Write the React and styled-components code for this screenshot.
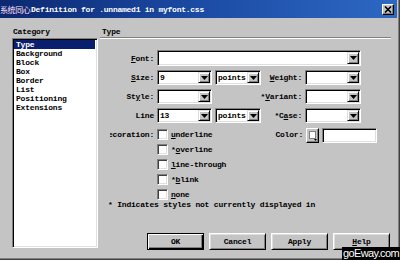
import React from 'react';
import styled, { createGlobalStyle } from 'styled-components';

const MONO = `"Liberation Mono", "DejaVu Sans Mono", "Noto Sans CJK SC", monospace`;
const FACE = '#c4c4c4';

const Global = createGlobalStyle`
  html, body { margin: 0; padding: 0; background: ${FACE}; }
  body { font-family: ${MONO}; }
  * { box-sizing: border-box; }
`;

const Window = styled.div`
  position: relative;
  width: 400px;
  height: 260px;
  background: ${FACE};
  display: flex;
  flex-direction: column;
  padding: 0 3px 2px 0;
  box-shadow: inset -1px -1px 0 #404040, inset -2px -2px 0 #808080;
  font-family: ${MONO};
  font-size: 8px;
  font-weight: bold;
  letter-spacing: -0.2px;
  color: #000;
  overflow: hidden;
`;

const TitleBar = styled.div`
  height: 18px;
  flex: 0 0 18px;
  display: flex;
  align-items: center;
  padding: 0 3px 0 0;
  background: linear-gradient(to right, #0b2870 0%, #1a48a0 45%, #2d68c4 100%);
  color: #fff;
`;

const Stamp = styled.span`
  flex: 0 0 auto;
  width: 31px;
  height: 15px;
  line-height: 15px;
  overflow: hidden;
  white-space: nowrap;
  color: #f4ecff;
  font-family: "Noto Sans CJK SC", sans-serif;
  font-size: 8px;
  font-weight: normal;
  letter-spacing: -0.4px;
  text-shadow: 1px 1px 0 #3a1060;
`;

const TitleText = styled.span`
  flex: 1;
  white-space: nowrap;
  letter-spacing: -0.25px;
`;

const CloseBtn = styled.span`
  width: 12px;
  height: 11px;
  background: ${FACE};
  border: 1px solid;
  border-color: #fff #000 #000 #fff;
  box-shadow: inset -1px -1px 0 #808080;
  display: flex;
  align-items: center;
  justify-content: center;
`;

const Body = styled.div`
  flex: 1;
  display: flex;
  gap: 2px;
  padding: 7px 5px 8px 12px;
`;

const LeftCol = styled.div`
  width: 86px;
  display: flex;
  flex-direction: column;
`;

const Header = styled.div`
  height: ${p => p.$h}px;
  line-height: 11px;
  padding: 1px 0 0 ${p => p.$pad}px;
  white-space: nowrap;
`;

const ListBox = styled.div`
  flex: 1;
  margin-bottom: 2px;
  background: #fff;
  border: 1px solid;
  border-color: #808080 #fff #fff #808080;
  box-shadow: inset 1px 1px 0 #000, inset -1px -1px 0 #dfdfdf;
  padding: 1px 2px 2px 1px;
  display: flex;
  flex-direction: column;
`;

const ListItem = styled.div`
  height: 9px;
  line-height: 9px;
  padding-left: 2px;
  white-space: nowrap;
  background: ${p => (p.$selected ? '#0a1e6e' : 'transparent')};
  color: ${p => (p.$selected ? '#fff' : '#000')};
`;

const RightCol = styled.div`
  flex: 1;
  display: flex;
  flex-direction: column;
`;

const Separator = styled.div`
  height: 2px;
  margin-right: 1px;
  border-top: 1px solid #808080;
  border-bottom: 1px solid #fff;
`;

const FormGrid = styled.div`
  display: grid;
  grid-template-columns: 54px 55px 46px 38px 56px;
  grid-template-rows: 16px 15px 15px 15px;
  column-gap: 3px;
  row-gap: 4px;
  margin-top: 11px;
`;

const Label = styled.span`
  display: flex;
  align-items: center;
  justify-content: flex-end;
  white-space: nowrap;
  grid-column: ${p => p.$col || 'auto'};
`;

const Combo = styled.div`
  height: 100%;
  display: flex;
  align-items: stretch;
  background: #fff;
  border: 1px solid;
  border-color: #808080 #fff #fff #808080;
  box-shadow: inset 1px 1px 0 #000, inset -1px -1px 0 #dfdfdf;
  padding: 1px;
  grid-column: ${p => p.$col || 'auto'};
`;

const ComboText = styled.span`
  flex: 1;
  display: flex;
  align-items: center;
  padding-left: 1px;
  overflow: hidden;
  white-space: nowrap;
`;

const ArrowBtn = styled.span`
  flex: 0 0 12px;
  width: 12px;
  background: ${FACE};
  border: 1px solid;
  border-color: #dfdfdf #000 #000 #dfdfdf;
  box-shadow: inset 1px 1px 0 #fff, inset -1px -1px 0 #808080;
  display: flex;
  align-items: center;
  justify-content: center;
`;

const DecoGrid = styled.div`
  display: grid;
  grid-template-columns: 54px 105px 38px auto;
  column-gap: 3px;
  margin-top: 6px;
  align-items: start;
`;

const ClipLabel = styled.span`
  margin-left: 10px;
  height: 11px;
  display: flex;
  align-items: center;
  justify-content: flex-end;
  overflow: hidden;
  white-space: nowrap;
  & > span { flex-shrink: 0; }
`;

const CheckList = styled.div`
  display: flex;
  flex-direction: column;
  gap: 4px;
`;

const CheckRow = styled.label`
  height: 11px;
  display: flex;
  align-items: center;
  gap: 3px;
  white-space: nowrap;
`;

const Box = styled.span`
  width: 11px;
  height: 11px;
  flex: 0 0 11px;
  background: #fff;
  border: 1px solid;
  border-color: #808080 #fff #fff #808080;
  box-shadow: inset 1px 1px 0 #404040, inset -1px -1px 0 #dfdfdf;
`;

const ColorLabel = styled.span`
  height: 11px;
  display: flex;
  align-items: center;
  justify-content: flex-end;
  white-space: nowrap;
`;

const ColorGroup = styled.div`
  display: flex;
  gap: 3px;
  margin-top: -1px;
`;

const Swatch = styled.span`
  position: relative;
  width: 13px;
  height: 15px;
  background: ${FACE};
  border: 1px solid;
  border-color: #fff #000 #000 #fff;
  box-shadow: inset -1px -1px 0 #808080;
  padding: 2px;
`;

const SwatchInner = styled.span`
  display: block;
  width: 7px;
  height: 8px;
  background: #fff;
  border: 1px solid #808080;
`;

const SwatchArrow = styled.svg`
  position: absolute;
  right: 1px;
  bottom: 1px;
`;

const TextInput = styled.span`
  width: 55px;
  height: 15px;
  background: #fff;
  border: 1px solid;
  border-color: #808080 #fff #fff #808080;
  box-shadow: inset 1px 1px 0 #000, inset -1px -1px 0 #dfdfdf;
`;

const Note = styled.div`
  margin: 0 0 0 8px;
  height: 10px;
  line-height: 10px;
  white-space: nowrap;
`;

const ButtonRow = styled.div`
  margin-top: auto;
  display: flex;
  justify-content: flex-end;
  gap: 5px;
  padding-right: 2px;
`;

const Button = styled.button`
  width: 57px;
  height: 17px;
  padding: 0;
  font-family: ${MONO};
  font-size: 8px;
  font-weight: bold;
  letter-spacing: -0.2px;
  color: #000;
  background: ${FACE};
  border: 1px solid;
  border-color: ${p => (p.$default ? '#000' : '#fff #000 #000 #fff')};
  box-shadow: ${p =>
    p.$default
      ? 'inset 1px 1px 0 #fff, inset -1px -1px 0 #000, inset -2px -2px 0 #808080'
      : 'inset 1px 1px 0 #dfdfdf, inset -1px -1px 0 #808080'};
`;

const SiteMark = styled.span`
  position: absolute;
  right: 0;
  bottom: 0;
  width: 58px;
  height: 13px;
  background: #000;
  color: #fff;
  font-family: "Liberation Sans", Arial, sans-serif;
  font-weight: normal;
  font-size: 11px;
  letter-spacing: -0.6px;
  line-height: 13px;
  text-align: center;
`;

const Tri = () => (
  <svg width="7" height="4" viewBox="0 0 7 4">
    <path d="M0 0H7L3.5 4Z" fill="#000" />
  </svg>
);

const Select = ({ value = '', col }) => (
  <Combo $col={col}>
    <ComboText>{value}</ComboText>
    <ArrowBtn>
      <Tri />
    </ArrowBtn>
  </Combo>
);

const categories = ['Type', 'Background', 'Block', 'Box', 'Border', 'List', 'Positioning', 'Extensions'];

const checks = [
  [<u key="u">u</u>, 'nderline'],
  ['*', <u key="o">o</u>, 'verline'],
  [<u key="l">l</u>, 'ine-through'],
  ['*', <u key="b">b</u>, 'link'],
  [<u key="n">n</u>, 'one'],
];

export default function App() {
  return (
    <>
      <Global />
      <Window>
        <TitleBar>
          <Stamp>系统同心</Stamp>
          <TitleText>Definition for .unnamed1 in myfont.css</TitleText>
          <CloseBtn>
            <svg width="8" height="7" viewBox="0 0 8 7">
              <path d="M1 0.5L7 6.5M7 0.5L1 6.5" stroke="#000" strokeWidth="1.6" />
            </svg>
          </CloseBtn>
        </TitleBar>
        <Body>
          <LeftCol>
            <Header $h={13} $pad={1}>Category</Header>
            <ListBox>
              {categories.map((c, i) => (
                <ListItem key={c} $selected={i === 0}>
                  {c}
                </ListItem>
              ))}
            </ListBox>
          </LeftCol>
          <RightCol>
            <Header $h={12} $pad={2}>Type</Header>
            <Separator />
            <FormGrid>
              <Label>
                <u>F</u>ont:
              </Label>
              <Select col="2 / 6" />

              <Label>
                <u>S</u>ize:
              </Label>
              <Select value="9" />
              <Select value="points" />
              <Label>
                <u>W</u>eight:
              </Label>
              <Select />

              <Label>
                St<u>y</u>le:
              </Label>
              <Select />
              <Label $col="4">
                *<u>V</u>ariant:
              </Label>
              <Select />

              <Label>Line</Label>
              <Select value="13" />
              <Select value="points" />
              <Label>
                *C<u>a</u>se:
              </Label>
              <Select />
            </FormGrid>
            <DecoGrid>
              <ClipLabel>
                <span>Decoration:</span>
              </ClipLabel>
              <CheckList>
                {checks.map((parts, i) => (
                  <CheckRow key={i}>
                    <Box />
                    <span>{parts}</span>
                  </CheckRow>
                ))}
              </CheckList>
              <ColorLabel>Color:</ColorLabel>
              <ColorGroup>
                <Swatch>
                  <SwatchInner />
                  <SwatchArrow width="3" height="2" viewBox="0 0 3 2">
                    <path d="M0 0H3L1.5 2Z" fill="#000" />
                  </SwatchArrow>
                </Swatch>
                <TextInput />
              </ColorGroup>
            </DecoGrid>
            <Note>* Indicates styles not currently displayed in</Note>
            <ButtonRow>
              <Button $default>OK</Button>
              <Button>Cancel</Button>
              <Button>Apply</Button>
              <Button>
                <u>H</u>elp
              </Button>
            </ButtonRow>
          </RightCol>
        </Body>
        <SiteMark>goEway.com</SiteMark>
      </Window>
    </>
  );
}
